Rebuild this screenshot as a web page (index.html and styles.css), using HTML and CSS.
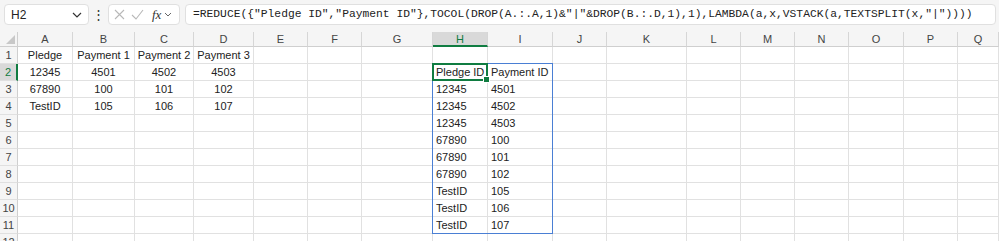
FILE: index.html
```html
<!DOCTYPE html>
<html lang="en">
<head>
    <meta charset="UTF-8">
    <title>Sheet1</title>
    <link rel="stylesheet" href="styles.css">
</head>
<body>
    <div class="toolbar">
        <div class="namebox">
            <span>H2</span>
            <svg width="10" height="6" viewBox="0 0 10 6"><path d="M1 1l4 4 4-4" fill="none" stroke="#333" stroke-width="1.2"/></svg>
        </div>
        <div class="dots">&#8942;</div>
        <div class="fxbox">
            <svg width="11" height="11" viewBox="0 0 11 11"><path d="M1 1l9 9M10 1l-9 9" stroke="#b8b8b8" stroke-width="1.1"/></svg>
            <svg width="13" height="11" viewBox="0 0 13 11"><path d="M1 6l4 4 7-9" fill="none" stroke="#b8b8b8" stroke-width="1.1"/></svg>
            <span class="fx">fx</span>
            <svg width="8" height="5" viewBox="0 0 8 5"><path d="M1 1l3 3 3-3" fill="none" stroke="#666" stroke-width="1"/></svg>
        </div>
        <div class="formula">=REDUCE({"Pledge ID","Payment ID"},TOCOL(DROP(A.:.A,1)&amp;"|"&amp;DROP(B.:.D,1),1),LAMBDA(a,x,VSTACK(a,TEXTSPLIT(x,"|"))))</div>
    </div>

    <div class="sheet-wrap">
        <div class="sheet" id="sheet"></div>
        <!-- selection layer, same grid as the sheet -->
        <div class="sheet overlay">
            <div class="spill"></div>
            <div class="active"></div>
        </div>
    </div>

    <script>
        const cols = ['A','B','C','D','E','F','G','H','I','J','K','L','M','N','O','P','Q'];
        const data = {
            1: { A: 'Pledge', B: 'Payment 1', C: 'Payment 2', D: 'Payment 3' },
            2: { A: '12345', B: '4501', C: '4502', D: '4503', H: 'Pledge ID', I: 'Payment ID' },
            3: { A: '67890', B: '100', C: '101', D: '102', H: '12345', I: '4501' },
            4: { A: 'TestID', B: '105', C: '106', D: '107', H: '12345', I: '4502' },
            5: { H: '12345', I: '4503' },
            6: { H: '67890', I: '100' },
            7: { H: '67890', I: '101' },
            8: { H: '67890', I: '102' },
            9: { H: 'TestID', I: '105' },
            10: { H: 'TestID', I: '106' },
            11: { H: 'TestID', I: '107' }
        };

        const sheet = document.getElementById('sheet');

        function addCell(cls, text) {
            const div = document.createElement('div');
            div.className = cls;
            div.textContent = text || '';
            sheet.appendChild(div);
        }

        addCell('corner');
        cols.forEach(c => addCell(c === 'H' ? 'colhead selected' : 'colhead', c));

        for (let r = 1; r <= 12; r++) {
            addCell(r === 2 ? 'rowhead selected' : 'rowhead', r);
            cols.forEach(c => {
                const row = data[r] || {};
                const left = (c === 'H' || c === 'I');
                addCell(left ? 'cell left' : 'cell', row[c]);
            });
        }
    </script>
</body>
</html>
```

FILE: styles.css
```css
body {
    margin: 0;
    background: #fff;
    font-family: "Liberation Sans", Arial, sans-serif;
    overflow: hidden;
}
.toolbar {
    height: 32px;
    background: #f5f5f5;
    display: flex;
    align-items: flex-start;
    padding: 4px 3px 0 4px;
    box-sizing: border-box;
}
.namebox {
    width: 85px;
    height: 21px;
    box-sizing: border-box;
    background: #fff;
    border: 1px solid #e0e0e0;
    border-radius: 4px;
    display: flex;
    align-items: center;
    justify-content: space-between;
    padding: 0 6px 0 6px;
    font-size: 12px;
    color: #222;
}
.dots {
    width: 19px;
    text-align: center;
    font-size: 13px;
    line-height: 21px;
    color: #333;
}
.fxbox {
    width: 72px;
    height: 21px;
    box-sizing: border-box;
    background: #fff;
    border: 1px solid #e0e0e0;
    border-radius: 4px;
    display: flex;
    align-items: center;
    gap: 6px;
    padding: 0 4px 0 5px;
}
.fx {
    font-family: "Liberation Serif", serif;
    font-style: italic;
    font-size: 13px;
    color: #333;
    margin-left: 2px;
    margin-right: -3px;
}
.formula {
    flex: 1;
    height: 21px;
    box-sizing: border-box;
    margin-left: 5px;
    background: #fff;
    border: 1px solid #e0e0e0;
    border-radius: 4px;
    padding-left: 7px;
    font-family: "Liberation Mono", monospace;
    font-size: 11.3px;
    line-height: 19px;
    color: #222;
    white-space: nowrap;
    overflow: hidden;
}
.sheet-wrap {
    position: relative;
}
.sheet {
    display: grid;
    grid-template-columns: 18px 55px 62px 59px 60px 54px 54px 71px 55px 65px 54px 80px 54px 54px 54px 55px 54px 1fr;
    grid-template-rows: 15px repeat(12, 17px);
    font-size: 11px;
    color: #222;
}
.overlay {
    position: absolute;
    top: 0;
    left: 0;
    right: 0;
    bottom: 0;
    pointer-events: none;
}
.corner,
.colhead,
.rowhead,
.cell {
    box-sizing: border-box;
    overflow: hidden;
    white-space: nowrap;
}
.corner {
    background: #f5f5f5;
    border-right: 1px solid #cfcfcf;
    border-bottom: 1px solid #cfcfcf;
    position: relative;
}
.corner::after {
    content: "";
    position: absolute;
    right: 2px;
    bottom: 2px;
    border-left: 9px solid transparent;
    border-bottom: 9px solid #c8c8c8;
}
.colhead {
    background: #f5f5f5;
    border-right: 1px solid #d6d6d6;
    border-bottom: 1px solid #cfcfcf;
    text-align: center;
    line-height: 14px;
    color: #444;
}
.rowhead {
    background: #f5f5f5;
    border-right: 1px solid #cfcfcf;
    border-bottom: 1px solid #e0e0e0;
    text-align: center;
    line-height: 17px;
    color: #444;
}
.colhead.selected {
    background: #d9d9d9;
    border-bottom: 2px solid #107c41;
    color: #107c41;
}
.rowhead.selected {
    background: #d9d9d9;
    border-right: 2px solid #107c41;
    color: #107c41;
}
.cell {
    border-right: 1px solid #e1e1e1;
    border-bottom: 1px solid #e1e1e1;
    text-align: center;
    line-height: 17px;
}
.cell.left {
    text-align: left;
    padding-left: 3px;
}
.spill {
    grid-column: 9 / 11;
    grid-row: 3 / 13;
    border: 1px solid #4a7fd4;
    margin: -1px 0 0 -1px;
}
.active {
    grid-column: 9 / 10;
    grid-row: 3 / 4;
    border: 2px solid #107c41;
    margin: -1px 0 0 -1px;
    position: relative;
}
.active::after {
    content: "";
    position: absolute;
    right: -4px;
    bottom: -4px;
    width: 5px;
    height: 5px;
    background: #107c41;
    border: 1px solid #fff;
}
```
